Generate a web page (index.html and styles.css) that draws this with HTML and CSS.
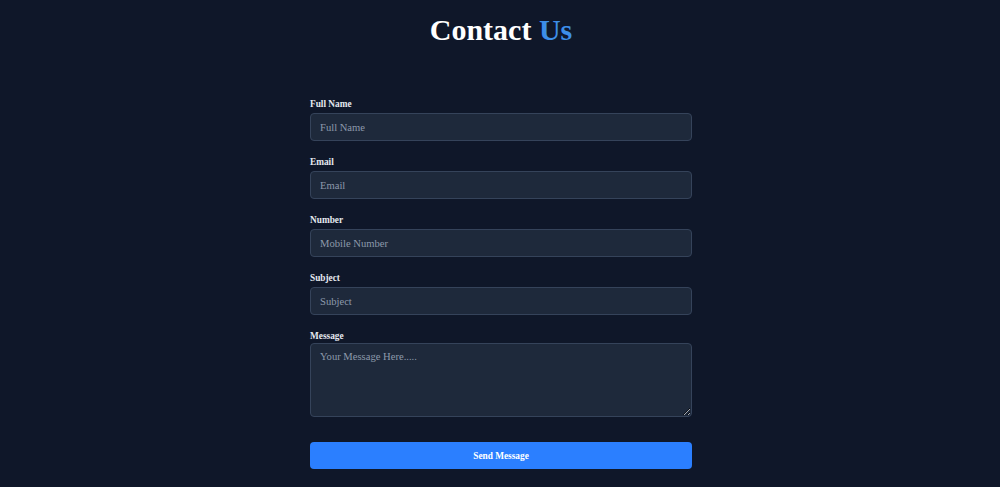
FILE: index.html
```html
<!DOCTYPE html>
<html lang="en">
<head>
<meta charset="utf-8">
<title>Contact Us</title>
<link rel="stylesheet" href="styles.css">
</head>
<body>
  <h1 class="title">Contact <span class="accent">Us</span></h1>
  <form class="contact-form">
    <div class="field">
      <label class="label" for="name">Full Name</label>
      <input class="input" id="name" type="text" placeholder="Full Name">
    </div>
    <div class="field">
      <label class="label" for="email">Email</label>
      <input class="input" id="email" type="email" placeholder="Email">
    </div>
    <div class="field">
      <label class="label" for="number">Number</label>
      <input class="input" id="number" type="text" placeholder="Mobile Number">
    </div>
    <div class="field">
      <label class="label" for="subject">Subject</label>
      <input class="input" id="subject" type="text" placeholder="Subject">
    </div>
    <div class="field">
      <label class="label label-tight" for="message">Message</label>
      <textarea class="input textarea" id="message" placeholder="Your Message Here....."></textarea>
    </div>
    <button class="submit" type="button">Send Message</button>
  </form>
</body>
</html>
```

FILE: styles.css
```css
html, body {
  margin: 0;
  padding: 0;
  background: #0f1729;
  font-family: "Liberation Serif", "Times New Roman", serif;
  color: #e2e8f0;
}
body {
  padding-top: 12px;
  padding-left: 2px;
}
.title {
  margin: 0;
  text-align: center;
  font-size: 30px;
  line-height: 36px;
  font-weight: bold;
  color: #ffffff;
}
.accent {
  color: #3d8ee8;
}
.contact-form {
  width: 382px;
  margin: 51px auto 0;
  display: flex;
  flex-direction: column;
}
.field {
  display: flex;
  flex-direction: column;
  margin-bottom: 16px;
}
.label {
  font-size: 9.3px;
  line-height: 11px;
  font-weight: bold;
  color: #e5e9f0;
  margin-bottom: 3px;
}
.label-tight {
  margin-bottom: 1px;
}
.input {
  box-sizing: border-box;
  display: block;
  width: 100%;
  height: 28px;
  padding: 0 9px;
  background: #1e293b;
  border: 1px solid #35435a;
  border-radius: 4px;
  color: #e2e8f0;
  font-family: "Liberation Serif", "Times New Roman", serif;
  font-size: 10.6px;
  outline: none;
}
.input::placeholder {
  color: #8d99ab;
}
.textarea {
  height: 74px;
  padding-top: 7px;
  resize: vertical;
}
.submit {
  margin-top: 9px;
  height: 27px;
  border: none;
  border-radius: 4px;
  background: #2b7fff;
  color: #ffffff;
  font-family: "Liberation Serif", "Times New Roman", serif;
  font-size: 9.3px;
  font-weight: bold;
  cursor: pointer;
}
```
